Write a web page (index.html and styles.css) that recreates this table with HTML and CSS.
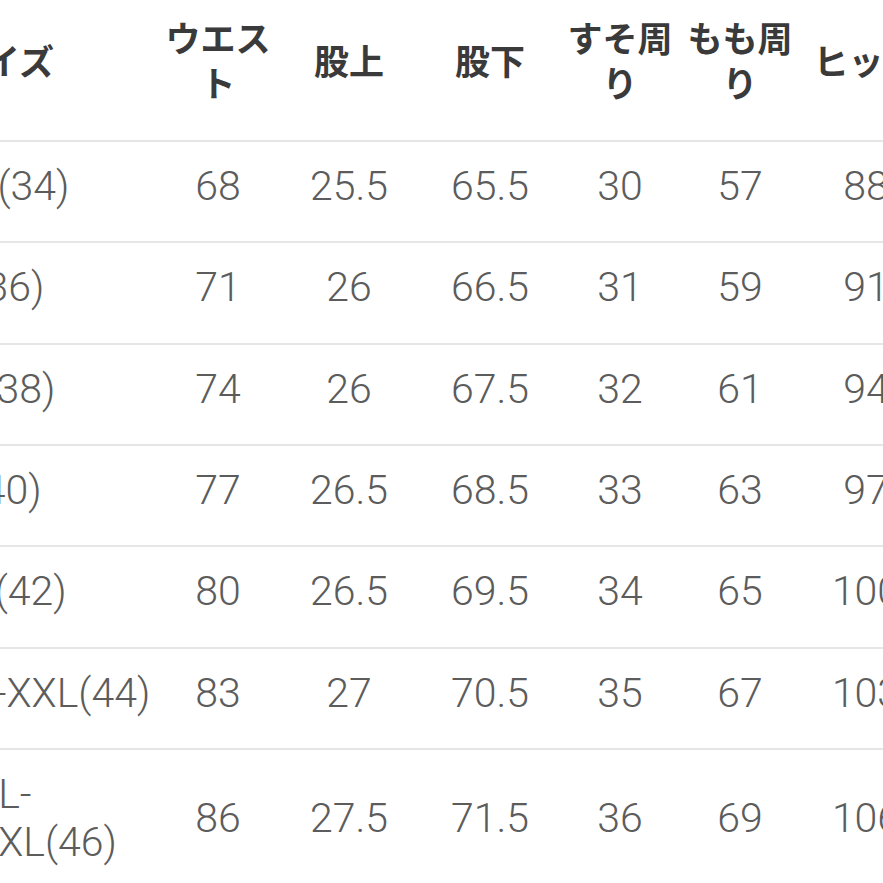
FILE: index.html
```html
<!DOCTYPE html>
<html lang="ja">
<head>
<meta charset="utf-8">
<title>サイズ表</title>
<link rel="stylesheet" href="styles.css">
</head>
<body>
<div class="frame">
  <table class="size-table">
    <colgroup>
      <col class="c-size">
      <col class="c-waist">
      <col class="c-rise">
      <col class="c-inseam">
      <col class="c-hem">
      <col class="c-thigh">
      <col class="c-hip">
    </colgroup>
    <thead>
      <tr>
        <th class="first">サイズ</th>
        <th>ウエスト</th>
        <th>股上</th>
        <th>股下</th>
        <th>すそ周り</th>
        <th>もも周り</th>
        <th>ヒップ</th>
      </tr>
    </thead>
    <tbody>
      <tr><td class="first">XS(34)</td><td>68</td><td>25.5</td><td>65.5</td><td>30</td><td>57</td><td>88</td></tr>
      <tr><td class="first">S(36)</td><td>71</td><td>26</td><td>66.5</td><td>31</td><td>59</td><td>91</td></tr>
      <tr><td class="first">M(38)</td><td>74</td><td>26</td><td>67.5</td><td>32</td><td>61</td><td>94</td></tr>
      <tr><td class="first">L(40)</td><td>77</td><td>26.5</td><td>68.5</td><td>33</td><td>63</td><td>97</td></tr>
      <tr><td class="first">XL(42)</td><td>80</td><td>26.5</td><td>69.5</td><td>34</td><td>65</td><td>100</td></tr>
      <tr><td class="first">XL-XXL(44)</td><td>83</td><td>27</td><td>70.5</td><td>35</td><td>67</td><td>103</td></tr>
      <tr><td class="first">XXL-XXXL(46)</td><td>86</td><td>27.5</td><td>71.5</td><td>36</td><td>69</td><td>106</td></tr>
    </tbody>
  </table>
</div>
</body>
</html>
```

FILE: styles.css
```css
html, body {
  margin: 0;
  padding: 0;
  background: #ffffff;
}

body {
  width: 883px;
  height: 883px;
  overflow: hidden;
}

.frame {
  width: 883px;
  height: 883px;
  overflow: hidden;
}

.size-table {
  margin: -22px 0 0 -52px;
  width: 979px;
  table-layout: fixed;
  border-collapse: collapse;
  border-spacing: 0;
}

.c-size { width: 205px; }
.c-waist { width: 130px; }
.c-rise { width: 132px; }
.c-inseam { width: 150px; }
.c-hem { width: 110px; }
.c-thigh { width: 130px; }
.c-hip { width: 122px; }

.size-table th {
  font-family: "Noto Sans CJK JP", "Noto Sans", sans-serif;
  font-weight: 700;
  font-size: 35px;
  line-height: 45px;
  color: #3a3a3a;
  text-align: center;
  vertical-align: middle;
  height: 163px;
  padding: 0;
  border-bottom: 2px solid #e6e6e6;
  box-sizing: border-box;
}

.size-table td {
  font-family: "Roboto", "Noto Sans CJK JP", sans-serif;
  font-weight: 300;
  font-size: 41px;
  line-height: 48px;
  color: #5c5c5c;
  text-align: center;
  vertical-align: middle;
  padding: 20px 0 31.33px;
  border-bottom: 2px solid #e6e6e6;
}

.size-table tbody tr:last-child td {
  border-bottom: none;
}

.size-table th.first {
  text-align: left;
  padding-left: 2px;
}

.size-table td.first {
  text-align: left;
  padding-left: 0;
  padding-right: 0;
}
```
